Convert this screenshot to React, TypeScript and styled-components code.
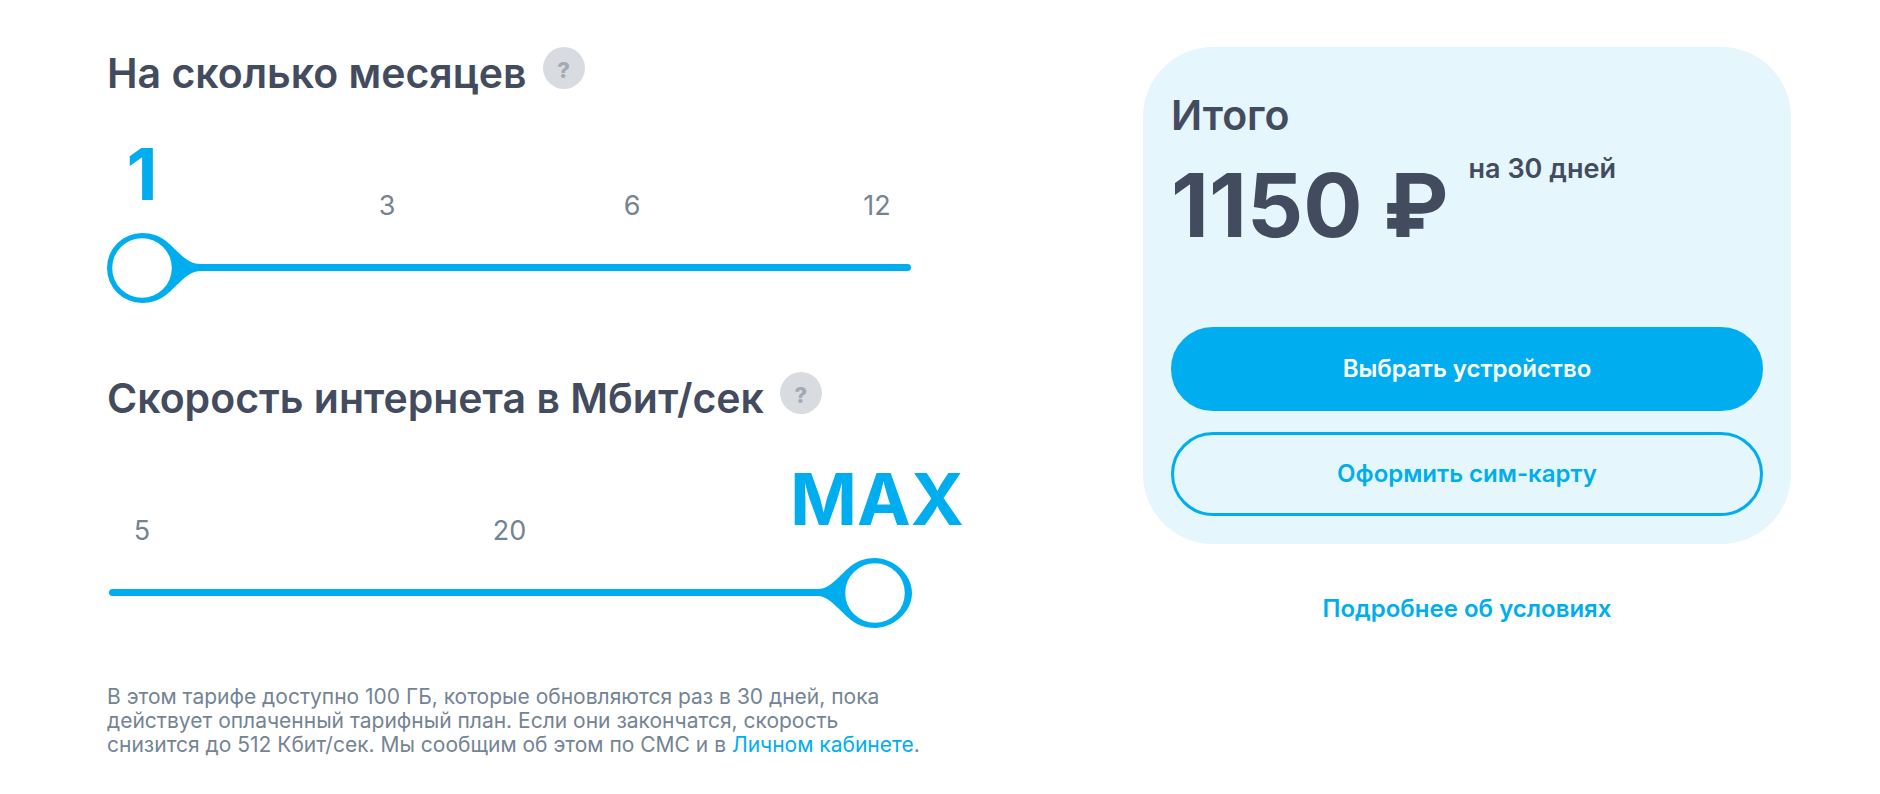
import React, { useId, useState } from 'react';
import styled, { createGlobalStyle } from 'styled-components';

const ink = '#434b5e';
const blue = '#00aeef';
const muted = '#748494';
const panel = '#e5f6fd';

const GlobalStyle = createGlobalStyle`
  *, *::before, *::after { box-sizing: border-box; }
  body {
    margin: 0;
    background: #fff;
    color: ${ink};
    font-family: Inter, 'Open Sans', sans-serif;
  }
  h2, p { margin: 0; }
  button { font-family: inherit; cursor: pointer; }
`;

const Page = styled.main`
  display: grid;
  grid-template-columns: minmax(0, 805fr) minmax(0, 648fr);
  column-gap: 231px;
  align-items: start;
  padding: 47px 89px 32px 107px;
`;

const Options = styled.form`
  display: flex;
  flex-direction: column;
  gap: 69px;
`;

const Section = styled.section`
  display: flex;
  flex-direction: column;
`;

const SectionHead = styled.div`
  display: flex;
  align-items: flex-start;
  gap: 16px;
`;

const Title = styled.h2`
  font-size: 41px;
  font-weight: 600;
  line-height: 52px;
  white-space: nowrap;
`;

const HelpButton = styled.button`
  flex: none;
  width: 42px;
  height: 42px;
  padding: 4px 0 0;
  border: 0;
  border-radius: 50%;
  background: #d8dce1;
  color: #a3aab3;
  font-size: 22px;
  font-weight: 800;
  line-height: 32px;
`;

const Scale = styled.div`
  display: flex;
  justify-content: space-between;
  align-items: flex-end;
  height: 84px;
  margin-top: 37px;
`;

const Mark = styled.button<{ $active: boolean }>`
  display: flex;
  justify-content: center;
  width: 70px;
  padding: 0;
  margin-bottom: ${(p) => (p.$active ? '10px' : '0')};
  border: 0;
  background: none;
  color: ${(p) => (p.$active ? blue : muted)};
  font-size: ${(p) => (p.$active ? '72px' : '27px')};
  font-weight: ${(p) => (p.$active ? 700 : 400)};
  line-height: ${(p) => (p.$active ? '72px' : '28px')};
  white-space: nowrap;
`;

const Track = styled.div`
  display: grid;
  align-items: start;
  height: 70px;
  margin-top: 13px;

  & > * { grid-area: 1 / 1; }
`;

const Line = styled.div<{ $inset: 'start' | 'end' | 'none' }>`
  height: 7px;
  margin-top: 31px;
  margin-left: ${(p) => (p.$inset === 'start' ? '80px' : '2px')};
  margin-right: ${(p) => (p.$inset === 'end' ? '80px' : '1px')};
  border-radius: 4px;
  background: ${blue};
`;

const Thumb = styled.svg`
  display: block;
  height: 70px;
`;

const RangeInput = styled.input`
  width: 100%;
  height: 70px;
  margin: 0;
  opacity: 0;
  cursor: pointer;
`;

const thumbs = {
  start: {
    width: 94,
    center: 35,
    anchor: 35,
    d: 'M35 0C55 0 63 12 72 20C80 28 86 31 94 31V38C86 38 80 42 72 50C63 58 55 70 35 70A35 35 0 0 1 35 0Z',
  },
  none: {
    width: 114,
    center: 57,
    anchor: 57,
    d: 'M57 0C77 0 85 12 94 20C102 28 108 31 114 31V38C108 38 102 42 94 50C85 58 77 70 57 70C37 70 29 58 20 50C12 42 6 38 0 38V31C6 31 12 28 20 20C29 12 37 0 57 0Z',
  },
  end: {
    width: 94,
    center: 57,
    anchor: 59,
    d: 'M57 0C37 0 29 12 20 20C12 28 6 31 0 31V38C6 38 12 42 20 50C29 58 37 70 57 70C74 70 94 55 94 35C94 15 74 0 57 0Z',
  },
};

const Note = styled.p`
  margin-top: 57px;
  color: ${muted};
  font-size: 21px;
  line-height: 24px;
  white-space: nowrap;
`;

const InlineLink = styled.a`
  color: ${blue};
  text-decoration: none;
`;

const Summary = styled.aside`
  display: flex;
  flex-direction: column;
  align-items: center;
  gap: 49px;
`;

const Card = styled.div`
  align-self: stretch;
  padding: 42px 28px 28px;
  border-radius: 70px;
  background: ${panel};
`;

const PriceRow = styled.div`
  display: flex;
  align-items: flex-start;
  gap: 20px;
  margin-top: 12px;
`;

const Price = styled.strong`
  font-size: 88px;
  font-weight: 700;
  line-height: 104px;
  white-space: nowrap;
`;

const Period = styled.span`
  font-size: 27px;
  font-weight: 600;
  line-height: 32px;
  white-space: nowrap;
`;

const Actions = styled.div`
  display: flex;
  flex-direction: column;
  gap: 21px;
  margin-top: 70px;
`;

const ActionButton = styled.button<{ $primary?: boolean }>`
  height: 84px;
  border: 3px solid ${blue};
  border-radius: 42px;
  background: ${(p) => (p.$primary ? blue : 'transparent')};
  color: ${(p) => (p.$primary ? '#fff' : blue)};
  font-size: 24px;
  font-weight: 600;
  line-height: 32px;
`;

const DetailsLink = styled.a`
  color: ${blue};
  font-size: 24px;
  font-weight: 600;
  line-height: 32px;
  text-decoration: none;
`;

interface PickerProps {
  title: string;
  values: string[];
  initial: number;
}

function Picker({ title, values, initial }: PickerProps) {
  const [index, setIndex] = useState(initial);
  const id = useId();
  const last = values.length - 1;
  const side = index === 0 ? 'start' : index === last ? 'end' : 'none';
  const thumb = thumbs[side];

  return (
    <Section>
      <SectionHead>
        <Title>
          <label htmlFor={id}>{title}</label>
        </Title>
        <HelpButton type="button">?</HelpButton>
      </SectionHead>
      <Scale>
        {values.map((value, i) => (
          <Mark key={value} type="button" $active={i === index} onClick={() => setIndex(i)}>
            {value}
          </Mark>
        ))}
      </Scale>
      <Track>
        <Line $inset={side} />
        <Thumb
          width={thumb.width}
          viewBox={`0 0 ${thumb.width} 70`}
          aria-hidden="true"
          style={{ marginLeft: `calc(35px + (100% - 70px) * ${index / last} - ${thumb.anchor}px)` }}
        >
          <path d={thumb.d} fill={blue} />
          <circle cx={thumb.center} cy="35" r="29.8" fill="#fff" />
        </Thumb>
        <RangeInput
          id={id}
          type="range"
          min={0}
          max={last}
          value={index}
          onChange={(e) => setIndex(Number(e.target.value))}
        />
      </Track>
    </Section>
  );
}

export default function App() {
  return (
    <>
      <GlobalStyle />
      <Page>
        <div>
          <Options>
            <Picker title="На сколько месяцев" values={['1', '3', '6', '12']} initial={0} />
            <Picker title="Скорость интернета в Мбит/сек" values={['5', '20', 'MAX']} initial={2} />
          </Options>
          <Note>
            В этом тарифе доступно 100 ГБ, которые обновляются раз в 30 дней, пока
            <br />
            действует оплаченный тарифный план. Если они закончатся, скорость
            <br />
            снизится до 512 Кбит/сек. Мы сообщим об этом по СМС и в{' '}
            <InlineLink href="#account">Личном кабинете</InlineLink>.
          </Note>
        </div>
        <Summary>
          <Card>
            <Title>Итого</Title>
            <PriceRow>
              <Price>1150 ₽</Price>
              <Period>на 30 дней</Period>
            </PriceRow>
            <Actions>
              <ActionButton type="button" $primary>
                Выбрать устройство
              </ActionButton>
              <ActionButton type="button">Оформить сим-карту</ActionButton>
            </Actions>
          </Card>
          <DetailsLink href="#details">Подробнее об условиях</DetailsLink>
        </Summary>
      </Page>
    </>
  );
}
